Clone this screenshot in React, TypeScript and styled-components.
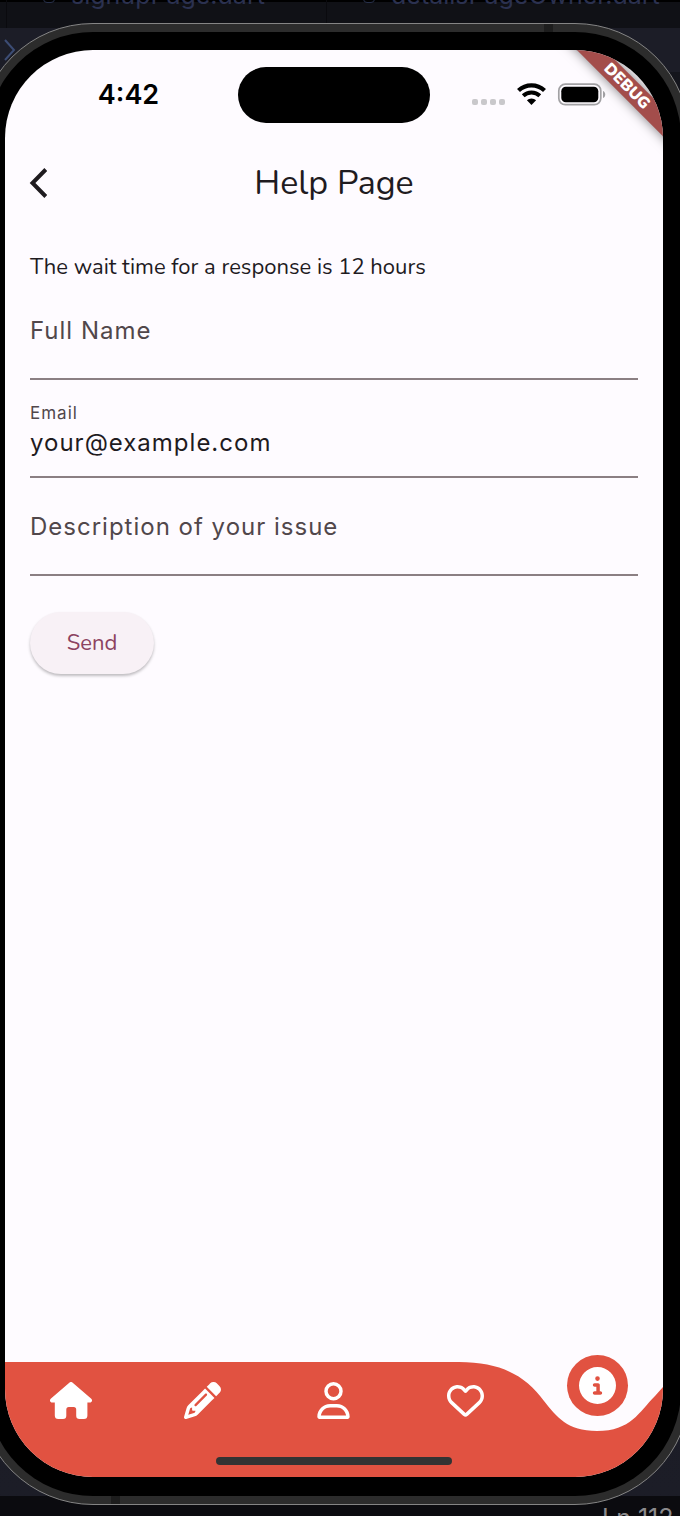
import React from "react";
import styled, { createGlobalStyle } from "styled-components";
import { FaPencil, FaRegUser, FaRegHeart, FaCircleInfo } from "react-icons/fa6";

const coral = "#e15241";
const surface = "#fefbff";
const ink = "#1f1b1f";
const rounded = 'Nunito, "Open Sans", "Noto Sans", sans-serif';
const system = 'Inter, "Liberation Sans", sans-serif';

const GlobalStyle = createGlobalStyle`
  *, *::before, *::after { box-sizing: border-box; }
  body { margin: 0; background: #0c0c10; }
`;

const Desktop = styled.div`
  position: relative;
  display: flex;
  min-height: 100vh;
  overflow: hidden;
  padding: 23px 0 11px;
`;

const Editor = styled.div`
  position: absolute;
  inset: 0;
  display: flex;
  flex-direction: column;
  background: #101117;
  font-family: ${system};
`;

const TabBar = styled.div`
  display: flex;
  align-items: flex-end;
  height: 28px;
  padding-left: 6px;
  background: #101116;
  border-top: 2px solid #000;
`;

const Tab = styled.div`
  display: flex;
  flex: none;
  align-items: center;
  gap: 16px;
  width: 320px;
  height: 66px;
  padding-left: 36px;
  border-left: 1px solid #0a0a0e;
  color: #2b3150;
  font-size: 25px;
  line-height: 28px;
  white-space: nowrap;
`;

const FileMark = styled.i`
  flex: none;
  width: 12px;
  height: 16px;
  border: 1px solid #27304a;
  border-radius: 4px;
`;

const Breadcrumb = styled.div`
  height: 44px;
  padding: 11px 4px;
  background: #1c1d27;
  color: #3c4c74;
`;

const Code = styled.div`
  flex: 1;
  background: linear-gradient(#14151c, #1c1d27);
`;

const StatusBar = styled.div`
  display: flex;
  justify-content: flex-end;
  height: 20px;
  overflow: hidden;
  background: #0b0b0f;
  color: #8b8a8c;
  font-size: 25px;
  line-height: 44px;
  white-space: nowrap;
`;

const Position = styled.span`
  width: 78px;
`;

const Phone = styled.main`
  position: relative;
  display: flex;
  flex: 1;
  margin: 0 -10px 0 -22px;
  padding: 8px;
  border: 1px solid #858585;
  border-radius: 115px;
  background: #2c2c2c;
`;

const AntennaBand = styled.span<{ $edge: "top" | "bottom" }>`
  position: absolute;
  ${(p) => (p.$edge === "top" ? "top: 0; right: 136px;" : "bottom: 0; left: 132px;")}
  width: 9px;
  height: 8px;
  background: #1d1d1d;
`;

const Bezel = styled.div`
  display: flex;
  flex: 1;
  padding: 18px 18px 19px;
  border-radius: 106px;
  background: #000;
`;

const Screen = styled.div`
  position: relative;
  display: flex;
  flex: 1;
  flex-direction: column;
  overflow: hidden;
  border-radius: 88px;
  background: ${surface};
`;

const StatusRow = styled.div`
  display: grid;
  grid-template-columns: 1fr 192px 1fr;
  align-items: center;
  height: 90px;
`;

const Clock = styled.time`
  padding-left: 14px;
  color: #000;
  font: 600 27px/32px ${system};
  text-align: center;
`;

const Island = styled.div`
  height: 56px;
  border-radius: 28px;
  background: #000;
`;

const Indicators = styled.div`
  display: flex;
  align-items: center;
  padding-left: 41px;
`;

const Ribbon = styled.div`
  position: absolute;
  top: 26px;
  right: -49px;
  width: 170px;
  height: 20px;
  transform: rotate(45deg);
  background: #a34d4b;
  box-shadow: 0 0 12px rgba(0, 0, 0, 0.5);
  color: #fff;
  font: 900 16px/20px ${rounded};
  text-align: center;
`;

const AppBar = styled.header`
  display: grid;
  grid-template-columns: 48px 1fr 48px;
  align-items: center;
  height: 86px;
  padding: 0 10px;
`;

const BackButton = styled.button`
  display: grid;
  place-items: center;
  height: 48px;
  padding: 0;
  border: 0;
  background: none;
`;

const Title = styled.h1`
  margin: 0;
  color: ${ink};
  font: 400 34px/44px ${rounded};
  text-align: center;
`;

const Form = styled.form`
  display: flex;
  flex: 1;
  flex-direction: column;
  align-items: stretch;
  padding: 26px 25px;
`;

const Notice = styled.p`
  margin: 0;
  color: ${ink};
  font: 400 22px/30px ${rounded};
`;

const Field = styled.div<{ $filled?: boolean }>`
  display: flex;
  flex-direction: column;
  justify-content: center;
  height: 98px;
  padding-top: ${(p) => (p.$filled ? "6px" : "2px")};
  border-bottom: 2px solid #8b7f83;
  color: #51474b;
  font-family: ${system};
  letter-spacing: 1px;

  label {
    font-size: ${(p) => (p.$filled ? "17px" : "24px")};
    line-height: ${(p) => (p.$filled ? "24px" : "32px")};
  }

  input {
    width: 100%;
    height: ${(p) => (p.$filled ? "36px" : "0")};
    padding: 0;
    border: 0;
    outline: 0;
    background: none;
    color: ${ink};
    font: 400 24px/36px ${system};
    letter-spacing: 1px;
  }
`;

const SendButton = styled.button`
  align-self: flex-start;
  width: 124px;
  height: 62px;
  margin-top: 36px;
  border: 0;
  border-radius: 31px;
  background: #f8f1f6;
  box-shadow: 0 2px 3px rgba(0, 0, 0, 0.25);
  color: #8c4360;
  font: 400 22px/30px ${rounded};
`;

const Nav = styled.nav`
  position: relative;
  display: grid;
  grid-template-columns: repeat(5, 1fr);
  align-items: start;
  height: 122px;
`;

const NavShape = styled.svg`
  position: absolute;
  inset: 0;
  width: 100%;
  height: 100%;
`;

const NavLink = styled.a<{ $active?: boolean }>`
  position: relative;
  display: grid;
  place-items: center;
  justify-self: center;
  width: 61px;
  height: 61px;
  margin-top: ${(p) => (p.$active ? "0" : "15px")};
  border-radius: 50%;
  background: ${(p) => (p.$active ? coral : "none")};
  color: #fff;

  svg {
    width: auto;
    height: 37px;
  }
`;

const HomeIndicator = styled.div`
  position: absolute;
  bottom: 12px;
  left: 50%;
  width: 236px;
  height: 8px;
  margin-left: -118px;
  border-radius: 4px;
  background: #333;
`;

function HouseIcon() {
  return (
    <svg viewBox="0 0 42 37" fill="currentColor" aria-hidden="true">
      <path d="M19.300 .7a2.600 2.600 0 0 1 3.400 0L41 16.600c2 1.700.9 4-1.200 4H37.400V33.500a3.500 3.500 0 0 1-3.500 3.500H29.500a3.300 3.300 0 0 1-3.300-3.300V27.500a2.500 2.500 0 0 0-2.500-2.500H18.800a2.500 2.500 0 0 0-2.500 2.500V33.700a3.300 3.300 0 0 1-3.300 3.300H8.300a3.500 3.500 0 0 1-3.500-3.500V20.600H2.200c-2.100 0-3.200-2.300-1.200-4z" />
    </svg>
  );
}

export default function App() {
  return (
    <>
      <GlobalStyle />
      <Desktop>
        <Editor>
          <TabBar>
            <Tab><FileMark />signupPage.dart</Tab>
            <Tab><FileMark />detailsPageOwner.dart</Tab>
          </TabBar>
          <Breadcrumb>
            <svg width="12" height="22" viewBox="0 0 12 22" fill="none" stroke="currentColor" strokeWidth="2">
              <path d="M1 1l9 10-9 10" />
            </svg>
          </Breadcrumb>
          <Code />
          <StatusBar><Position>Ln 112</Position></StatusBar>
        </Editor>
        <Phone>
          <AntennaBand $edge="top" />
          <AntennaBand $edge="bottom" />
          <Bezel>
            <Screen>
              <StatusRow>
                <Clock>4:42</Clock>
                <Island />
                <Indicators>
                  <svg width="136" height="30" viewBox="0 0 136 30" aria-label="Wi-Fi connected, battery full">
                    <g fill="#c9c8cb">
                      <rect x="1" y="19" width="6" height="6" rx="2" />
                      <rect x="10" y="19" width="6" height="6" rx="2" />
                      <rect x="19" y="19" width="6" height="6" rx="2" />
                      <rect x="28" y="19" width="6" height="6" rx="2" />
                    </g>
                    <path d="M47.500 10.500a19 19 0 0 1 26 0" fill="none" stroke="#000" strokeWidth="4.3" />
                    <path d="M52.200 15.800a12 12 0 0 1 16.600 0" fill="none" stroke="#000" strokeWidth="4" />
                    <path d="M60.500 25l-4.600-4.700a6.500 6.500 0 0 1 9.200 0z" />
                    <rect x="87.8" y="4.2" width="42" height="20.500" rx="6.5" fill="none" stroke="#a2a1a4" strokeWidth="1.7" />
                    <rect x="90.3" y="6.7" width="37" height="15.500" rx="4.5" />
                    <path d="M132 11c3 1 3 6 0 7z" fill="#a2a1a4" />
                  </svg>
                </Indicators>
              </StatusRow>
              <Ribbon>DEBUG</Ribbon>
              <AppBar>
                <BackButton type="button" aria-label="Back">
                  <svg width="20" height="32" viewBox="0 0 20 32" fill="none" stroke={ink} strokeWidth="4">
                    <path d="M16.800 2.500L3.500 16l13.300 13.500" />
                  </svg>
                </BackButton>
                <Title>Help Page</Title>
              </AppBar>
              <Form>
                <Notice>The wait time for a response is 12 hours</Notice>
                <Field>
                  <label htmlFor="name">Full Name</label>
                  <input id="name" />
                </Field>
                <Field $filled>
                  <label htmlFor="email">Email</label>
                  <input id="email" type="email" defaultValue="your@example.com" />
                </Field>
                <Field>
                  <label htmlFor="issue">Description of your issue</label>
                  <input id="issue" />
                </Field>
                <SendButton type="button">Send</SendButton>
              </Form>
              <Nav>
                <NavShape viewBox="0 0 658 122" preserveAspectRatio="none" aria-hidden="true">
                  <path
                    fill={coral}
                    d="M0 7H454C496 7 521 21 539 46C552 62 562 76 592 76C626 76 634 57 650 41L658 32V122H0Z"
                  />
                </NavShape>
                <NavLink href="#home" aria-label="Home"><HouseIcon /></NavLink>
                <NavLink href="#edit" aria-label="Edit"><FaPencil /></NavLink>
                <NavLink href="#profile" aria-label="Profile"><FaRegUser /></NavLink>
                <NavLink href="#favourites" aria-label="Favourites"><FaRegHeart /></NavLink>
                <NavLink href="#help" aria-label="Help" $active><FaCircleInfo /></NavLink>
                <HomeIndicator />
              </Nav>
            </Screen>
          </Bezel>
        </Phone>
      </Desktop>
    </>
  );
}
